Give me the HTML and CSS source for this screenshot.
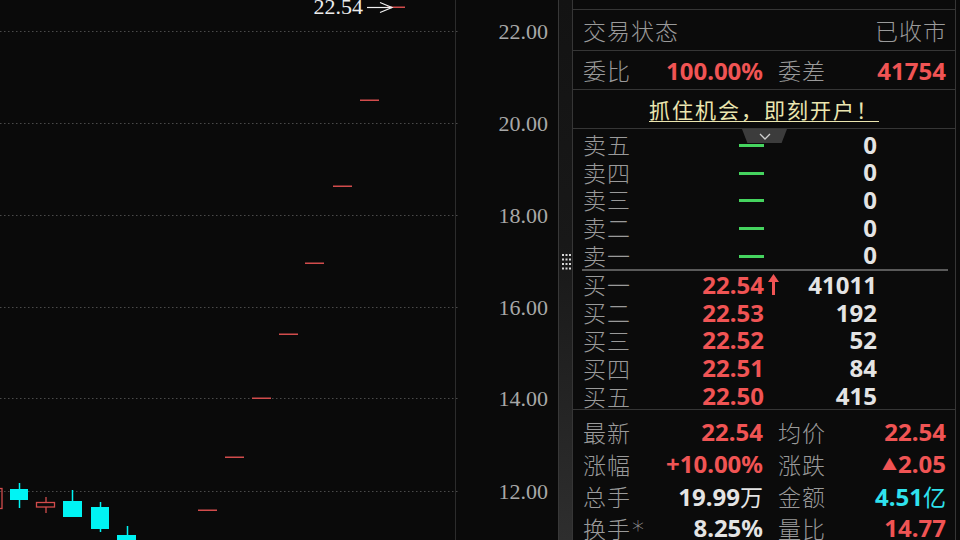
FILE: index.html
```html
<!DOCTYPE html>
<html lang="zh-CN">
<head>
<meta charset="utf-8">
<title>行情</title>
<link rel="stylesheet" href="styles.css">
</head>
<body>
<div class="app">
  <div class="chart">
    <svg class="kline" width="558" height="540" viewBox="0 0 558 540">
      <g class="grid">
        <line x1="0" y1="31.5" x2="459" y2="31.5"/>
        <line x1="0" y1="123.5" x2="459" y2="123.5"/>
        <line x1="0" y1="215.5" x2="459" y2="215.5"/>
        <line x1="0" y1="307.5" x2="459" y2="307.5"/>
        <line x1="0" y1="398.5" x2="459" y2="398.5"/>
        <line x1="0" y1="491.5" x2="459" y2="491.5"/>
      </g>
      <line class="axis-line" x1="455.5" y1="0" x2="455.5" y2="540"/>
      <g class="axis">
        <text x="548" y="39">22.00</text>
        <text x="548" y="131">20.00</text>
        <text x="548" y="223">18.00</text>
        <text x="548" y="315">16.00</text>
        <text x="548" y="406">14.00</text>
        <text x="548" y="499">12.00</text>
      </g>
      <g class="flat">
        <rect x="387" y="6.5" width="18" height="1.5"/>
        <rect x="360" y="99.5" width="19" height="1.5"/>
        <rect x="333" y="185.5" width="19" height="1.5"/>
        <rect x="305" y="262.5" width="19" height="1.5"/>
        <rect x="279" y="333.5" width="19" height="1.5"/>
        <rect x="252" y="397.5" width="19" height="1.5"/>
        <rect x="225" y="456.5" width="19" height="1.5"/>
        <rect x="198" y="509.5" width="19" height="1.5"/>
      </g>
      <g class="up">
        <rect x="-10" y="488.5" width="12" height="20"/>
        <line x1="46" y1="497" x2="46" y2="502"/>
        <line x1="46" y1="507" x2="46" y2="513"/>
        <rect x="36.5" y="502.5" width="18" height="4.5"/>
      </g>
      <g class="down">
        <line x1="19.5" y1="483" x2="19.5" y2="508"/>
        <rect x="10" y="489" width="18" height="11"/>
        <line x1="72.5" y1="490" x2="72.5" y2="501"/>
        <rect x="63" y="501" width="19" height="16"/>
        <line x1="100.5" y1="502" x2="100.5" y2="532"/>
        <rect x="91" y="507" width="18" height="22"/>
        <line x1="127.5" y1="526" x2="127.5" y2="535"/>
        <rect x="117" y="535" width="19" height="10"/>
      </g>
      <text class="last" x="363" y="14">22.54</text>
      <g class="pointer">
        <line x1="367" y1="7.5" x2="392" y2="7.5"/>
        <polyline points="380,2.5 392,7.5 380,12.5"/>
      </g>
    </svg>
  </div>

  <div class="splitter">
    <svg class="grip" width="9" height="16" viewBox="0 0 9 16">
      <g fill="#d8d8d8">
        <rect x="0" y="0" width="2" height="2"/><rect x="3.5" y="0" width="2" height="2"/><rect x="7" y="0" width="2" height="2"/>
        <rect x="0" y="4.5" width="2" height="2"/><rect x="3.5" y="4.5" width="2" height="2"/><rect x="7" y="4.5" width="2" height="2"/>
        <rect x="0" y="9" width="2" height="2"/><rect x="3.5" y="9" width="2" height="2"/><rect x="7" y="9" width="2" height="2"/>
        <rect x="0" y="13.5" width="2" height="2"/><rect x="3.5" y="13.5" width="2" height="2"/><rect x="7" y="13.5" width="2" height="2"/>
      </g>
    </svg>
  </div>

  <div class="panel">
    <div class="row status">
      <span class="lbl">交易状态</span>
      <span class="lbl">已收市</span>
    </div>
    <div class="row pair">
      <div class="cell"><span class="lbl">委比</span><span class="val red">100.00%</span></div>
      <div class="cell"><span class="lbl">委差</span><span class="val red">41754</span></div>
    </div>
    <div class="row promo">
      <span class="promo-link">抓住机会，即刻开户！</span>
    </div>

    <div class="book sell">
      <div class="tab">
        <svg width="12" height="7" viewBox="0 0 12 7"><polyline points="1,1 6,6 11,1" fill="none" stroke="#d0d0d0" stroke-width="1.3"/></svg>
      </div>
      <div class="level"><span class="lbl">卖五</span><span class="price"><i class="dash"></i></span><span class="mark"></span><span class="vol">0</span></div>
      <div class="level"><span class="lbl">卖四</span><span class="price"><i class="dash"></i></span><span class="mark"></span><span class="vol">0</span></div>
      <div class="level"><span class="lbl">卖三</span><span class="price"><i class="dash"></i></span><span class="mark"></span><span class="vol">0</span></div>
      <div class="level"><span class="lbl">卖二</span><span class="price"><i class="dash"></i></span><span class="mark"></span><span class="vol">0</span></div>
      <div class="level"><span class="lbl">卖一</span><span class="price"><i class="dash"></i></span><span class="mark"></span><span class="vol">0</span></div>
      <div class="sep"></div>
    </div>

    <div class="book buy">
      <div class="level"><span class="lbl">买一</span><span class="price red">22.54</span><span class="mark"><svg width="11" height="21" viewBox="0 0 11 21"><polygon points="5.5,0 11,8 7,8 7,21 4,21 4,8 0,8" fill="#f05454"/></svg></span><span class="vol">41011</span></div>
      <div class="level"><span class="lbl">买二</span><span class="price red">22.53</span><span class="mark"></span><span class="vol">192</span></div>
      <div class="level"><span class="lbl">买三</span><span class="price red">22.52</span><span class="mark"></span><span class="vol">52</span></div>
      <div class="level"><span class="lbl">买四</span><span class="price red">22.51</span><span class="mark"></span><span class="vol">84</span></div>
      <div class="level"><span class="lbl">买五</span><span class="price red">22.50</span><span class="mark"></span><span class="vol">415</span></div>
    </div>

    <div class="stats">
      <div class="cell"><span class="lbl">最新</span><span class="val red">22.54</span></div>
      <div class="cell"><span class="lbl">均价</span><span class="val red">22.54</span></div>
      <div class="cell"><span class="lbl">涨幅</span><span class="val red">+10.00%</span></div>
      <div class="cell"><span class="lbl">涨跌</span><span class="val red"><small class="tri">▲</small>2.05</span></div>
      <div class="cell"><span class="lbl">总手</span><span class="val">19.99<span class="unit">万</span></span></div>
      <div class="cell"><span class="lbl">金额</span><span class="val cyan">4.51<span class="unit">亿</span></span></div>
      <div class="cell"><span class="lbl">换手<span class="star">*</span></span><span class="val">8.25%</span></div>
      <div class="cell"><span class="lbl">量比</span><span class="val red">14.77</span></div>
    </div>
  </div>
  <div class="edge"></div>
</div>
</body>
</html>
```

FILE: styles.css
```css
* { box-sizing: border-box; }

html, body {
  margin: 0;
  padding: 0;
  background: #0a0a0a;
  overflow: hidden;
}

.app {
  display: flex;
  width: 960px;
  height: 540px;
  background: #0a0a0a;
  font-family: "Noto Sans CJK SC", "Noto Sans", sans-serif;
}

/* ---------- chart ---------- */
.chart {
  width: 558px;
  height: 540px;
  flex: none;
}
.kline { display: block; }
.grid line {
  stroke: #4a4a4a;
  stroke-width: 1;
  stroke-dasharray: 1.5 2.5;
}
.axis-line { stroke: #2c2c2c; stroke-width: 1; }
.axis text {
  font-family: "Liberation Serif", "DejaVu Serif", serif;
  font-size: 22px;
  fill: #a8a8a8;
  text-anchor: end;
}
.last {
  font-family: "Liberation Serif", "DejaVu Serif", serif;
  font-size: 22px;
  fill: #ececec;
  text-anchor: end;
}
.pointer line, .pointer polyline {
  stroke: #f0f0f0;
  stroke-width: 1.2;
  fill: none;
}
.flat rect { fill: #d24c4c; }
.up rect { fill: none; stroke: #d24c4c; stroke-width: 1.3; }
.up line { stroke: #d24c4c; stroke-width: 1.3; }
.down rect { fill: #00f4f4; }
.down line { stroke: #00f4f4; stroke-width: 1.5; }

/* ---------- splitter ---------- */
.splitter {
  width: 14px;
  flex: none;
  border-left: 1px solid #383838;
  background: linear-gradient(#131313 0%, #181818 45%, #2e2e2e 100%);
  display: flex;
  flex-direction: column;
  align-items: center;
  justify-content: center;
}
.grip { display: block; margin-bottom: 16px; margin-left: 1px; }

/* ---------- panel ---------- */
.panel {
  width: 384px;
  flex: none;
  height: 540px;
  border-left: 1px solid #363636;
  border-right: 1px solid #363636;
  padding-top: 9px;
  background: #0b0b0b;
  overflow: hidden;
}

.lbl {
  color: #9a9a9a;
  font-family: "Noto Sans CJK SC", sans-serif;
  font-weight: 300;
  font-size: 23px;
  letter-spacing: 1px;
  white-space: nowrap;
}
.star {
  font-family: "DejaVu Sans", sans-serif;
  font-size: 24px;
  position: relative;
  top: 0;
  margin-left: 1px;
}
.val {
  font-family: "Noto Sans", "Noto Sans CJK SC", sans-serif;
  font-weight: 700;
  font-size: 24px;
  color: #e4e4e4;
  white-space: nowrap;
}
.red { color: #f05454; }
.cyan { color: #2fe2ee; }
.unit {
  font-family: "Noto Sans CJK SC", sans-serif;
  font-weight: 400;
  font-size: 23px;
}
.tri {
  font-size: 15px;
  position: relative;
  top: -3px;
  margin-right: 1px;
}

.row {
  border-top: 1px solid #363636;
  padding: 0 8px 0 10px;
}
.status {
  height: 41px;
  display: flex;
  align-items: center;
  justify-content: space-between;
}
.pair {
  height: 39px;
  display: grid;
  grid-template-columns: 180px 168px;
  column-gap: 15px;
  align-items: center;
}
.cell {
  display: flex;
  align-items: center;
  justify-content: space-between;
}
.promo {
  height: 39px;
  display: flex;
  align-items: center;
  justify-content: center;
  padding-left: 8px;
}
.promo-link {
  color: #ebe6b0;
  font-family: "Noto Sans CJK SC", sans-serif;
  font-size: 21px;
  letter-spacing: 2px;
  text-decoration: underline;
  text-underline-offset: 3px;
  text-decoration-thickness: 1px;
  line-height: 1;
}

/* order book */
.book {
  padding: 0 8px 0 10px;
  position: relative;
}
.sell {
  border-top: 1px solid #363636;
  padding-top: 2px;
}
.level {
  display: grid;
  grid-template-columns: 120px 61px 16px 97px;
  align-items: center;
  height: 27.6px;
}
.level .lbl { line-height: 1; }
.price {
  text-align: right;
  font-family: "Noto Sans", sans-serif;
  font-weight: 700;
  font-size: 24px;
  line-height: 1;
  display: flex;
  justify-content: flex-end;
  align-items: center;
}
.dash {
  display: block;
  width: 25px;
  height: 3px;
  background: #45d45f;
  margin-top: 2px;
}
.mark {
  display: flex;
  justify-content: flex-end;
  align-items: center;
  padding-right: 1px;
}
.mark svg { display: block; }
.vol {
  text-align: right;
  font-family: "Noto Sans", sans-serif;
  font-weight: 700;
  font-size: 24px;
  line-height: 1;
  color: #e4e4e4;
}
.sep {
  height: 2px;
  background: #5a5a5a;
  margin: 0 0 0 -1px;
  width: 366px;
}
.tab {
  position: absolute;
  top: 0;
  left: 169px;
  width: 45px;
  height: 14px;
  background: #3c3c3c;
  clip-path: polygon(0 0, 100% 0, 88% 100%, 12% 100%);
  display: flex;
  justify-content: center;
  align-items: flex-start;
  padding-top: 4px;
}
.tab svg { display: block; }

.buy { height: 138px; }
.buy .level { height: 27.8px; }

.stats {
  border-top: 1px solid #363636;
  padding: 6px 8px 0 10px;
  display: grid;
  grid-template-columns: 180px 168px;
  column-gap: 15px;
  grid-auto-rows: 32px;
  align-items: center;
}

.edge {
  flex: 1;
  background: #0a0a0a;
}
```
